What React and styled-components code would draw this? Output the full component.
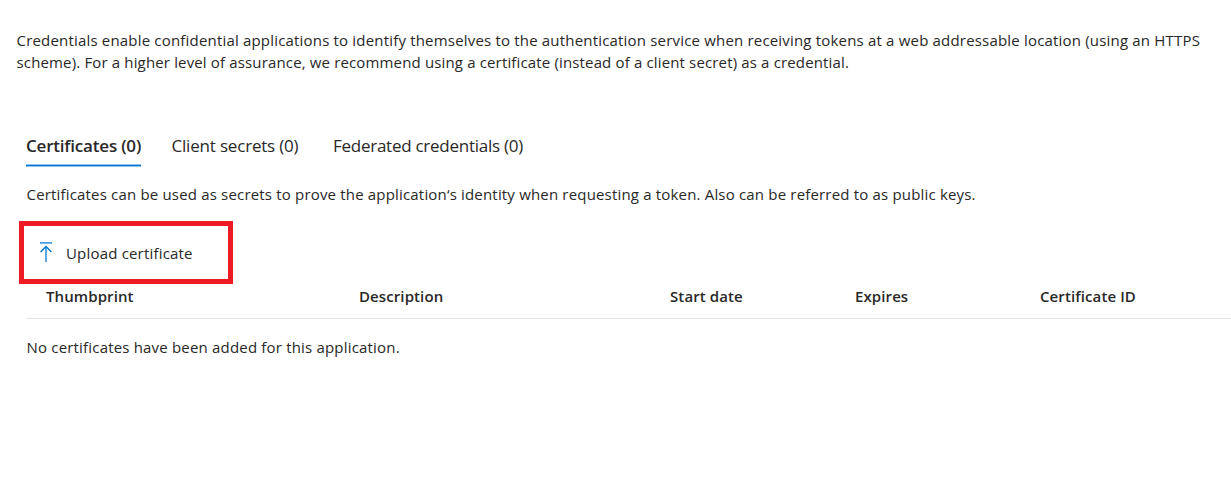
import React from "react";
import styled, { createGlobalStyle } from "styled-components";

const Global = createGlobalStyle`
  * { box-sizing: border-box; }
  body { margin: 0; background: #fff; color: #292827; font-family: "Open Sans", "Noto Sans", sans-serif; }
`;
const Page = styled.main`
  width: 1231px; height: 486px; overflow: hidden; padding-top: 29px;
`;
const Line = styled.span`
  display: block; width: max-content; white-space: nowrap;
  font-size: 15px; letter-spacing: ${(p) => p.$ls ?? 0.185}px;
`;
const HeadCell = styled(Line)`
  font-weight: 600; letter-spacing: 0.1px;
`;
const Intro = styled.p`
  margin: 0 0 0 16.5px; line-height: 22px;
`;
const Tabs = styled.nav`
  display: flex; margin: 59px 0 0 26px;
`;
const Tab = styled.div`
  width: ${(p) => p.$width}px; height: 35px; line-height: 28px; margin-right: ${(p) => p.$gap || 0}px;
  font-size: 17px; white-space: nowrap;
  font-weight: ${(p) => (p.$active ? 600 : 400)};
  letter-spacing: ${(p) => p.$ls}px;
  background: ${(p) => (p.$active
    ? "linear-gradient(#8cc2ed 1px, #0078d4 1px, #0078d4 2px, #8cc2ed 2px) bottom / 100% 3px no-repeat"
    : "none")};
`;
const Note = styled.p`
  margin: 16px 0 0 26.5px; line-height: 22px;
`;
const Upload = styled.button`
  display: flex; align-items: center; gap: 13px;
  margin: 16px 0 0 19px; width: 214px; height: 63px; padding: 0 0 0 15px;
  border: 5px solid #ed1c24; background: #fff; color: inherit; font-family: inherit;
`;
const UploadIcon = styled.svg`
  display: block; flex: none; margin-top: -2px;
`;
const Row = styled.div`
  display: grid; grid-template-columns: 313px 311px 185px 185px 1fr;
  margin-left: 26px; padding-left: 20px; height: 35px; line-height: 25px;
  border-bottom: 1px solid #e6e6e6;
`;
const Empty = styled.p`
  margin: 17px 0 0 26.5px; line-height: 22px;
`;

const headings = ["Thumbprint", "Description", "Start date", "Expires", "Certificate ID"];

export default function App() {
  return (
    <Page>
      <Global />
      <Intro>
        <Line>Credentials enable confidential applications to identify themselves to the authentication service when receiving tokens at a web addressable location (using an HTTPS</Line>
        <Line $ls={0.15}>scheme). For a higher level of assurance, we recommend using a certificate (instead of a client secret) as a credential.</Line>
      </Intro>
      <Tabs>
        <Tab $active $width={115} $gap={30.5} $ls={-0.2}>Certificates (0)</Tab>
        <Tab $width={128} $gap={33.5} $ls={-0.19}>Client secrets (0)</Tab>
        <Tab $width={191} $ls={-0.26}>Federated credentials (0)</Tab>
      </Tabs>
      <Note><Line $ls={0.178}>Certificates can be used as secrets to prove the application‘s identity when requesting a token. Also can be referred to as public keys.</Line></Note>
      <Upload>
        <UploadIcon width="14" height="20" viewBox="0 0 14 20" fill="none" stroke="#0078d4" strokeWidth="1.4">
          <path d="M1 .9h12M1.6 10l5.4-5.4 5.4 5.4" />
          <path d="M7 20V4.6" strokeWidth="2" strokeOpacity=".65" />
        </UploadIcon>
        <Line>Upload certificate</Line>
      </Upload>
      <Row>
        {headings.map((h) => <HeadCell key={h}>{h}</HeadCell>)}
      </Row>
      <Empty><Line>No certificates have been added for this application.</Line></Empty>
    </Page>
  );
}
